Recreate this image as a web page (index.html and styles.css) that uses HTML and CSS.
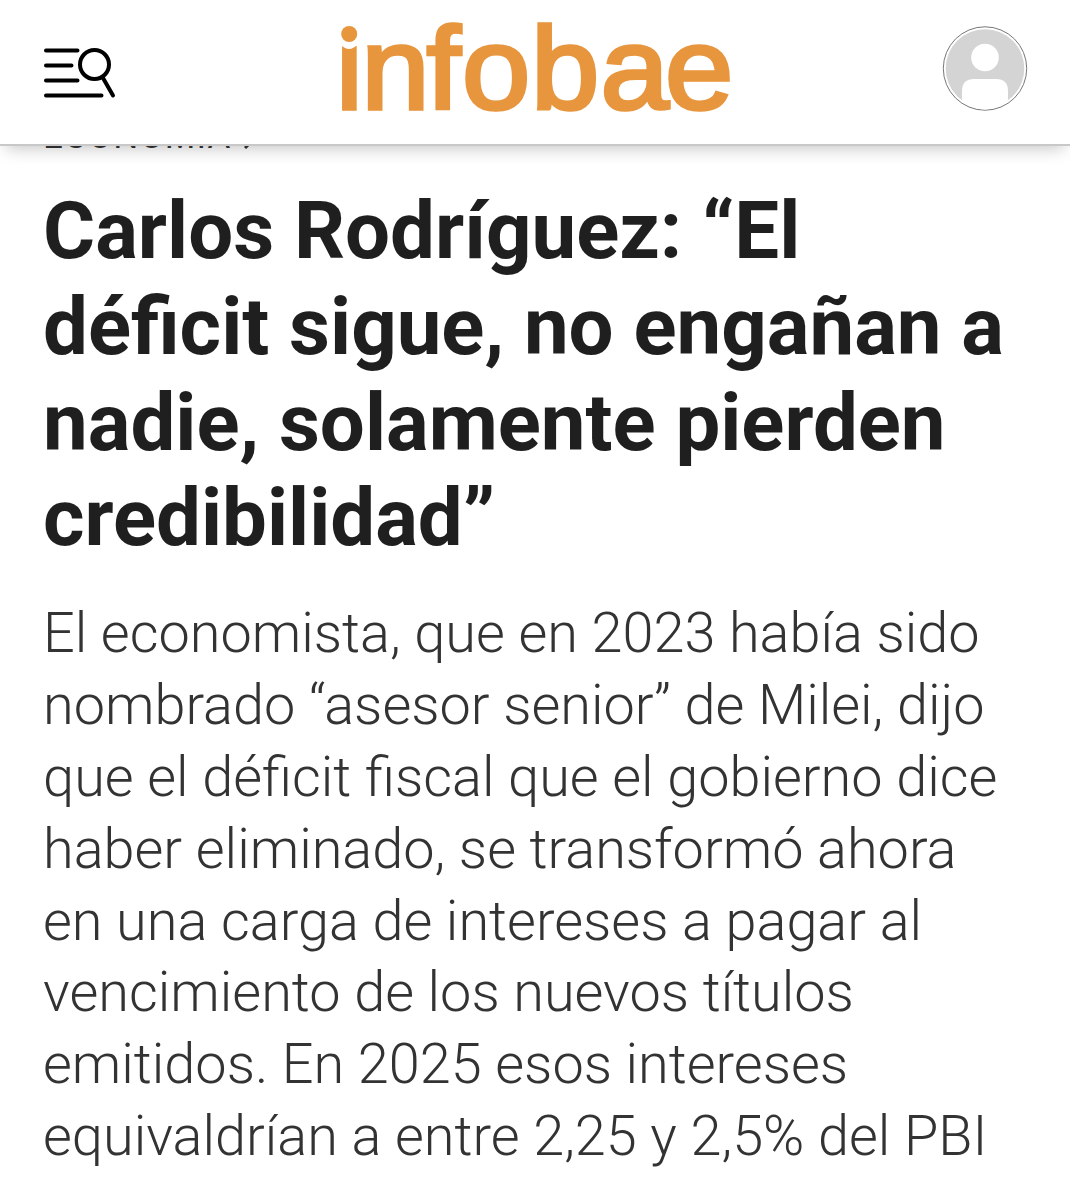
FILE: index.html
```html
<!DOCTYPE html>
<html lang="es">
<head>
    <meta charset="UTF-8">
    <meta name="viewport" content="width=device-width, initial-scale=1.0">
    <title>Infobae</title>
    <link rel="stylesheet" href="styles.css">
</head>
<body>

    <header class="site-header">
        <button class="menu-button" aria-label="Menú">
            <svg width="72" height="52" viewBox="0 0 72 52" fill="none" stroke="#000" stroke-width="4" stroke-linecap="round">
                <path d="M2 3.5H33.5M2 18.5H27.5M2 33.5H33.5M2 48.5H57.5" />
                <circle cx="50.5" cy="17.5" r="14.5" />
                <path d="M59 31L69 48.5" />
            </svg>
        </button>
        <a class="logo">
            <svg width="412" height="144" viewBox="-10 0 412 144">
                <text class="logo-text" transform="scale(1.05 1)" x="-4 20.3 82.4 116.2 182 248 309.5" y="109">infobae</text>
                <rect x="-2" y="16" width="22" height="30" fill="#fff" />
                <path d="M1 45Q9 53 17 45V40H1Z" fill="#fff" />
                <circle cx="9.2" cy="34" r="8" fill="#e8963e" />
            </svg>
        </a>
        <a class="avatar">
            <svg width="86" height="86" viewBox="0 0 86 86">
                <circle cx="43" cy="42.5" r="41.7" fill="#fff" stroke="#777" />
                <circle cx="43" cy="42.5" r="39.3" fill="#d4d4d4" />
                <circle cx="43" cy="31.5" r="13.8" fill="#fff" />
                <path d="M20 75V65Q20 53 32 53H54Q66 53 66 65V75Q43 92 20 75Z" fill="#fff" />
            </svg>
        </a>
    </header>

    <main class="article">
        <div class="section-name">ECONOMÍA
            <svg width="10" height="16" viewBox="0 0 10 16" fill="none" stroke="#333" stroke-width="3">
                <path d="M1 1L8 8L1 15" />
            </svg>
        </div>
        <h1 class="headline">Carlos Rodríguez: “El<br>déficit sigue, no engañan a<br>nadie, solamente pierden<br>credibilidad”</h1>
        <h2 class="subheadline">El economista, que en 2023 había sido<br>nombrado “asesor senior” de Milei, dijo<br>que el déficit fiscal que el gobierno dice<br>haber eliminado, se transformó ahora<br>en una carga de intereses a pagar al<br>vencimiento de los nuevos títulos<br>emitidos. En 2025 esos intereses<br>equivaldrían a entre 2,25 y 2,5% del PBI</h2>
    </main>

</body>
</html>
```

FILE: styles.css
```css
body {
    margin: 0;
    height: 1200px;
    overflow: hidden;
    background: #fff;
    font-family: Roboto, sans-serif;
}

.site-header {
    position: relative;
    z-index: 1;
    display: flex;
    box-sizing: border-box;
    height: 146px;
    padding: 0 42px 0 44px;
    border-bottom: 2px solid #c8c8c8;
    background: #fff;
    box-shadow: 0 8px 16px -6px rgba(0, 0, 0, 0.24);
}

.menu-button {
    height: 52px;
    margin: 47px 0 0;
    padding: 0;
    border: 0;
    background: none;
}

    .menu-button svg,
    .logo svg,
    .avatar svg {
        display: block;
    }

.logo {
    margin-left: 214px;
}

    .logo svg {
        overflow: visible;
    }

.logo-text {
    fill: #e8963e;
    stroke: #e8963e;
    stroke-width: 3.6px;
    font-family: "Liberation Sans", sans-serif;
    font-size: 117px;
}

.avatar {
    margin: 26px 0 0 auto;
}

.article {
    padding: 0 43px;
}

.section-name {
    display: flex;
    align-items: center;
    gap: 12px;
    height: 36px;
    margin-top: -27px;
    color: #333;
    font-size: 35px;
    line-height: 36px;
    letter-spacing: 1.2px;
}

    .section-name svg {
        margin-top: 8px;
    }

.headline {
    margin: 28px 0 0;
    color: #1f1f1f;
    font-size: 79.75px;
    font-weight: 700;
    line-height: 95.8px;
    white-space: nowrap;
}

.subheadline {
    margin: 32px 0 0;
    color: #333;
    font-size: 55.8px;
    font-weight: 300;
    line-height: 71.85px;
    white-space: nowrap;
}
```
